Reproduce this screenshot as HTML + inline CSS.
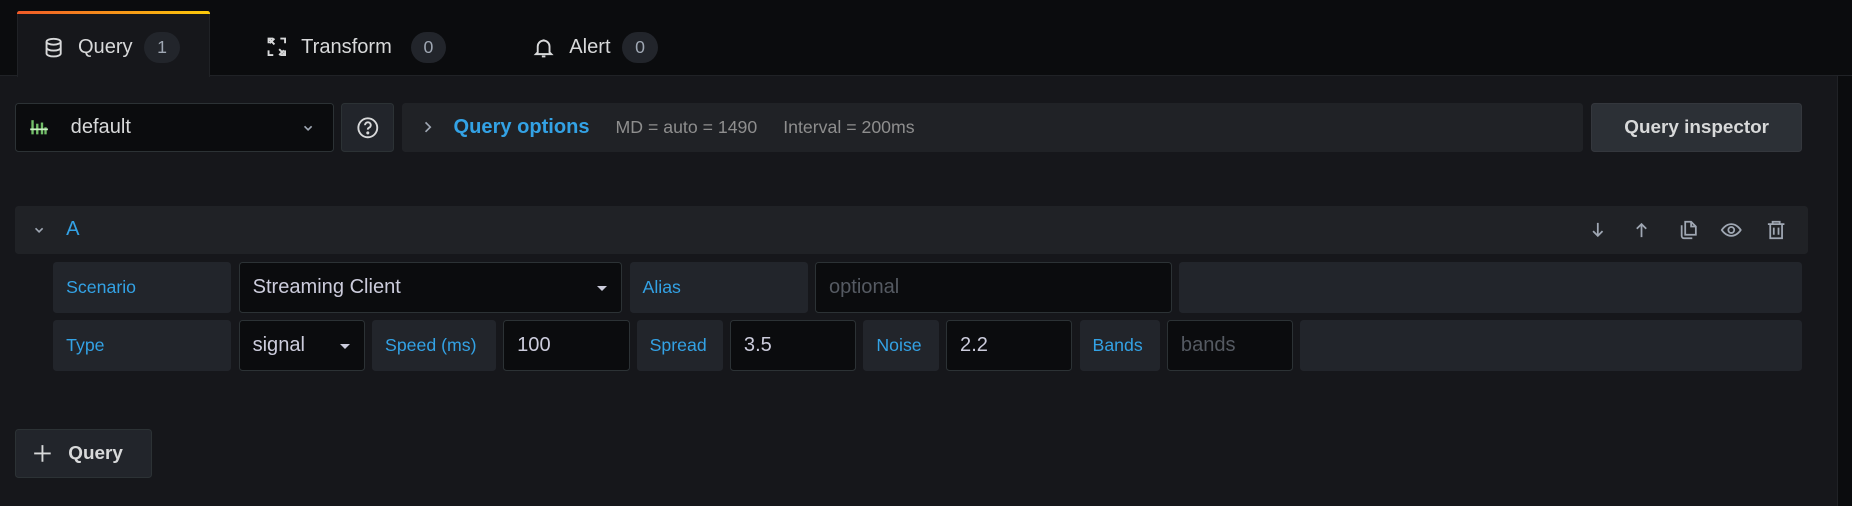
<!DOCTYPE html>
<html><head><style>
*{box-sizing:border-box;margin:0;padding:0}
html,body{width:1852px;height:506px;overflow:hidden;background:#111217}
#r{zoom:1.18112;width:1568px;height:428px;position:relative;background:#16171b;font-family:"Liberation Sans",sans-serif;color:#ccccdc}
.a{position:absolute}
.top{left:0;top:0;width:1568px;height:64px;background:#0b0c0e;border-bottom:1px solid #202226}
.tab{top:12px;height:56px;display:flex;align-items:center;font-size:17px;color:#d8d9da}
.badge{display:inline-block;background:#22252b;border-radius:14px;min-width:30px;height:26px;line-height:26px;text-align:center;font-size:15px;color:#9fa7b3;margin-left:10px}
.box{border-radius:3px;display:flex;align-items:center}
.lbl{background:#22252b;color:#33a2e5;font-size:15px;padding-left:11px;font-weight:500}
.inp{background:#0b0c0e;border:1px solid #2c3235;font-size:17px;padding-left:11px;color:#ccccdc}
.ph{color:#555a62}
.fill{background:#22252b}
.caret{position:absolute;right:12px;top:19px;width:0;height:0;border-left:5px solid transparent;border-right:5px solid transparent;border-top:5px solid #ccccdc}
</style></head><body><div id="r">
<div class="a top"></div>
<div class="a" style="left:1555px;top:64px;width:1px;height:364px;background:#202226"></div>
<div class="a" style="left:1556px;top:64px;width:12px;height:364px;background:#0b0c0e"></div>
<div class="a" style="left:14px;top:9px;width:164px;height:56px;background:#16171b;border:1px solid #202226;border-bottom:none;border-radius:2px 2px 0 0"></div>
<div class="a" style="left:14px;top:9px;width:164px;height:3px;background:linear-gradient(90deg,#f05a28,#fbca0a);border-radius:2px 2px 0 0"></div>
<div class="a tab" style="left:36px">
<svg width="18" height="18" viewBox="0 0 18 18" fill="none" stroke="#d8d9da" stroke-width="1.6"><ellipse cx="9" cy="4" rx="6" ry="2.5"/><path d="M3 4v10c0 1.4 2.7 2.5 6 2.5s6-1.1 6-2.5V4M3 9c0 1.4 2.7 2.5 6 2.5s6-1.1 6-2.5"/></svg>
<span style="margin-left:12px">Query</span><span class="badge">1</span></div>
<div class="a tab" style="left:224px">
<svg width="20" height="20" viewBox="0 0 20 20" fill="none" stroke="#d8d9da" stroke-width="1.6"><path d="M3 7V3h4M13 3h4v4M17 13v4h-4M7 17H3v-4M4 4l4 4M16 16l-4-4M8 3l-4 4M12 17l4-4"/></svg>
<span style="margin-left:11px">Transform</span><span class="badge" style="margin-left:16px">0</span></div>
<div class="a tab" style="left:451px">
<svg width="18" height="18" viewBox="0 0 18 18" fill="none" stroke="#d8d9da" stroke-width="1.6"><path d="M4 13V8a5 5 0 0 1 10 0v5l1.5 1.5h-13zM7.5 16.5h3M9 2v1"/></svg>
<span style="margin-left:13px">Alert</span><span class="badge">0</span></div>

<div class="a box inp" style="left:13px;top:87px;width:270px;height:42px">
<svg width="16" height="14" viewBox="0 0 16 14"><rect x="2" y="1" width="2" height="12" fill="#73bf69"/><rect x="6" y="4" width="2" height="9" fill="#73bf69"/><rect x="10" y="3" width="2" height="10" fill="#73bf69"/><rect x="13" y="7" width="2" height="6" fill="#73bf69"/><rect x="1" y="8" width="15" height="1.5" fill="#c9f2c2"/></svg>
<span style="margin-left:19px;color:#d8d9da">default</span>
<svg class="a" style="left:241px;top:15px" width="12" height="12" viewBox="0 0 12 12" fill="none" stroke="#9fa7b3" stroke-width="1.4"><path d="M3 4.5l3 3 3-3"/></svg></div>
<div class="a box" style="left:289px;top:87px;width:45px;height:42px;background:#22252b;border:1px solid #2c3235;justify-content:center">
<svg width="20" height="20" viewBox="0 0 20 20" fill="none" stroke="#d8d9da" stroke-width="1.6"><circle cx="10" cy="10" r="8"/><path d="M7.7 7.8a2.4 2.4 0 1 1 3.2 2.2c-.6.3-.9.8-.9 1.5"/><circle cx="10" cy="14.3" r=".5" fill="#d8d9da"/></svg></div>
<div class="a box" style="left:340px;top:87px;width:1000px;height:42px;background:#202226">
<svg class="a" style="left:17px;top:15px" width="10" height="12" viewBox="0 0 10 12" fill="none" stroke="#9fa7b3" stroke-width="1.4"><path d="M3 2l4 4-4 4"/></svg>
<span style="margin-left:44px;color:#33a2e5;font-size:17px;font-weight:bold">Query options</span>
<span style="margin-left:22px;color:#8e8e8e;font-size:15px">MD = auto = 1490</span>
<span style="margin-left:22px;color:#8e8e8e;font-size:15px">Interval = 200ms</span></div>
<div class="a box" style="left:1347px;top:87px;width:179px;height:42px;background:#2c3036;border:1px solid #34373d;justify-content:center;font-size:16px;font-weight:bold;color:#d8d9da">Query inspector</div>

<div class="a box" style="left:13px;top:174px;width:1518px;height:41px;background:#202226">
<svg class="a" style="left:14px;top:15px" width="12" height="12" viewBox="0 0 12 12" fill="none" stroke="#9fa7b3" stroke-width="1.4"><path d="M3 4.5l3 3 3-3"/></svg>
<span style="margin-left:43px;color:#33a2e5;font-size:17px">A</span></div>
<svg class="a" style="left:1343px;top:184px" width="175" height="22" viewBox="0 0 175 22" fill="none" stroke="#9fa7b3" stroke-width="1.5">
<path d="M10 5v11M6 12l4 4 4-4"/>
<path d="M47 17V6M43 10l4-4 4 4"/>
<path d="M81 7V16a2 2 0 0 0 2 2h7M84 4h5l4 4v7h-9zM89 4v4h4"/>
<path d="M115 11s3-5 8-5 8 5 8 5-3 5-8 5-8-5-8-5z"/><circle cx="123" cy="11" r="2.5"/>
<path d="M154 6h14M158 6V4h6v2M156 6v12h10V6M159 9v6M163 9v6"/>
</svg>

<div class="a box lbl" style="left:45px;top:222px;width:151px;height:43px">Scenario</div>
<div class="a box inp" style="left:202px;top:222px;width:325px;height:43px">Streaming Client<i class="caret"></i></div>
<div class="a box lbl" style="left:533px;top:222px;width:151px;height:43px">Alias</div>
<div class="a box inp ph" style="left:690px;top:222px;width:302px;height:43px">optional</div>
<div class="a box fill" style="left:998px;top:222px;width:528px;height:43px"></div>

<div class="a box lbl" style="left:45px;top:271px;width:151px;height:43px">Type</div>
<div class="a box inp" style="left:202px;top:271px;width:107px;height:43px">signal<i class="caret"></i></div>
<div class="a box lbl" style="left:315px;top:271px;width:105px;height:43px">Speed (ms)</div>
<div class="a box inp" style="left:426px;top:271px;width:107px;height:43px">100</div>
<div class="a box lbl" style="left:539px;top:271px;width:73px;height:43px">Spread</div>
<div class="a box inp" style="left:618px;top:271px;width:107px;height:43px">3.5</div>
<div class="a box lbl" style="left:731px;top:271px;width:64px;height:43px">Noise</div>
<div class="a box inp" style="left:801px;top:271px;width:107px;height:43px">2.2</div>
<div class="a box lbl" style="left:914px;top:271px;width:68px;height:43px">Bands</div>
<div class="a box inp ph" style="left:988px;top:271px;width:107px;height:43px">bands</div>
<div class="a box fill" style="left:1101px;top:271px;width:425px;height:43px"></div>

<div class="a box" style="left:13px;top:363px;width:116px;height:42px;background:#22252b;border:1px solid #2c3235;font-size:16px;font-weight:bold;color:#d8d9da">
<svg style="margin-left:14px" width="16" height="16" viewBox="0 0 16 16" stroke="#d8d9da" stroke-width="1.6"><path d="M8 1v14M1 8h14"/></svg>
<span style="margin-left:14px">Query</span></div>
</div></body></html>
